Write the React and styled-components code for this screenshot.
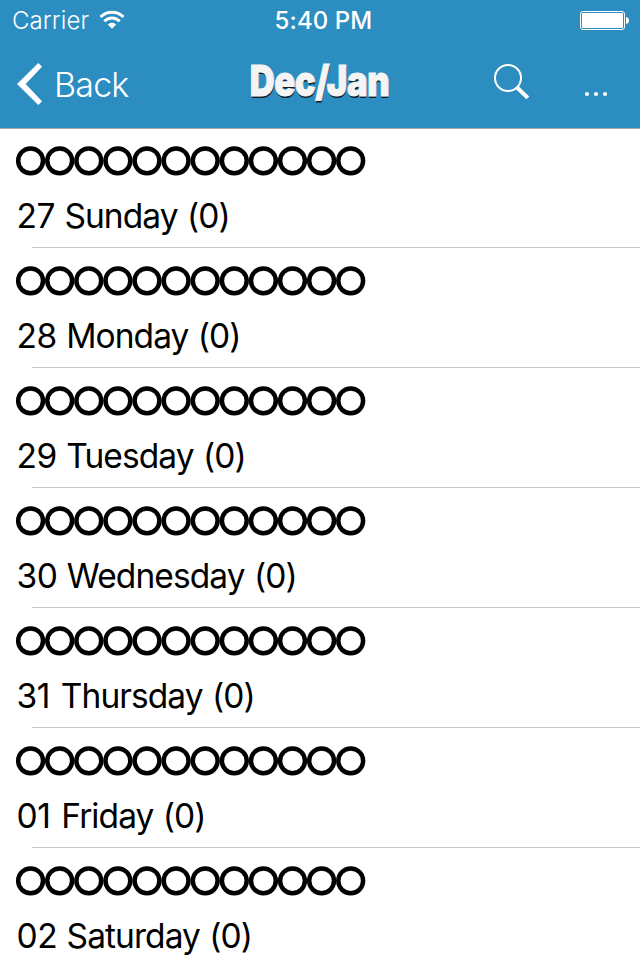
import styled, { createGlobalStyle } from "styled-components";

const GlobalStyle = createGlobalStyle`
    * {
        box-sizing: border-box;
    }
    body {
        margin: 0;
        background: #ffffff;
        font-family: Inter, "Liberation Sans", sans-serif;
    }
`;

const Screen = styled.div`
    width: 640px;
    height: 960px;
    overflow: hidden;
    background: #ffffff;
    color: #000000;
`;

const Header = styled.header`
    height: 129px;
    background: #2c8dc1;
    border-bottom: 1px solid #a7a9ab;
    color: #ffffff;
`;

const StatusBar = styled.div`
    display: grid;
    grid-template-columns: 1fr auto 1fr;
    align-items: center;
    height: 40px;
    padding: 0 11px 0 12px;
`;

const Carrier = styled.div`
    display: flex;
    align-items: center;
    gap: 10px;
    height: 40px;
    font-size: 24px;
    font-weight: 300;
    letter-spacing: 0.1px;
`;

const Clock = styled.div`
    height: 40px;
    padding: 1px 0 0 6px;
    font-size: 24px;
    font-weight: 500;
    line-height: 40px;
    letter-spacing: 0.1px;
`;

const BatteryIcon = styled.svg`
    display: block;
    justify-self: end;
`;

const NavBar = styled.nav`
    display: grid;
    grid-template-columns: 234px 172px 1fr;
    height: 88px;
`;

const BackButton = styled.div`
    display: flex;
    align-items: center;
    gap: 12px;
    height: 88px;
    padding-left: 16px;
    font-size: 34px;
    font-weight: 300;
    letter-spacing: -0.8px;
`;

const Title = styled.h1`
    display: flex;
    justify-content: center;
    margin: 0 1px 0 0;
    color: #f4f4f4;
    font-size: 42px;
    font-weight: 900;
    line-height: 82px;
    letter-spacing: -0.6px;
    white-space: nowrap;
    -webkit-text-stroke: 0.9px #f4f4f4;
    text-shadow: 0.5px 2px 0 #10202b;
    transform: scaleX(0.825);
`;

const Actions = styled.div`
    display: flex;
    padding: 24px 0 0 87px;
    gap: 54px;
`;

const List = styled.ul`
    margin: 0;
    padding: 0;
    list-style: none;
`;

const DayRow = styled.li`
    height: 120px;
    padding: 17px 0 0 16px;
`;

const Circles = styled.svg`
    display: block;
`;

const DayLabel = styled.div`
    margin: 17px 0 8px;
    padding-left: 0.5px;
    font-size: 33.5px;
    line-height: 46px;
    letter-spacing: -0.92px;
    word-spacing: 0.8px;
    white-space: nowrap;
`;

const DayNumber = styled.span`
    margin-right: ${(props) => (props.$narrow ? 1.5 : 0)}px;
    letter-spacing: -0.4px;
`;

const Divider = styled.div`
    height: 1px;
    margin-left: 16px;
    background: #c8c7cc;
`;

const days = [
    { date: "27", name: "Sunday" },
    { date: "28", name: "Monday" },
    { date: "29", name: "Tuesday" },
    { date: "30", name: "Wednesday" },
    { date: "31", name: "Thursday" },
    { date: "01", name: "Friday" },
    { date: "02", name: "Saturday" },
];

const slots = Array.from({ length: 12 }, (_, i) => i);

export default function App() {
    return (
        <Screen>
            <GlobalStyle />
            <Header>
                <StatusBar>
                    <Carrier>
                        <span>Carrier</span>
                        <svg width="26" height="20" viewBox="0 0 26 20" fill="none" stroke="#ffffff" strokeWidth="3">
                            <path d="M1.5 7A16.3 16.3 0 0 1 24.5 7" />
                            <path d="M5.3 11.2A10.6 10.6 0 0 1 20.7 11.2" />
                            <path d="M13 18.8L8.7 14.6A6 6 0 0 1 17.3 14.6Z" fill="#ffffff" stroke="none" />
                        </svg>
                    </Carrier>
                    <Clock>5:40 PM</Clock>
                    <BatteryIcon width="49" height="20" viewBox="0 0 49 20">
                        <rect x="0.5" y="1.5" width="44" height="18" rx="2.5" fill="none" stroke="#ffffff" />
                        <rect x="2" y="3" width="41" height="15" rx="1" fill="#ffffff" />
                        <path d="M46 7Q49 7.5 49 10.5T46 14Z" fill="#ffffff" />
                    </BatteryIcon>
                </StatusBar>
                <NavBar>
                    <BackButton>
                        <svg width="26" height="44" viewBox="0 0 26 44">
                            <path d="M22.3 1L26 4.8L9.7 22L26 39.2L22.3 43L1 22Z" fill="#ffffff" />
                        </svg>
                        <span>Back</span>
                    </BackButton>
                    <Title>Dec/Jan</Title>
                    <Actions>
                        <svg width="37" height="37" viewBox="0 0 37 37" fill="none" stroke="#ffffff">
                            <circle cx="15" cy="14" r="13" strokeWidth="2" />
                            <path d="M24 23.5L34.8 33.9" strokeWidth="4" />
                        </svg>
                        <svg width="26" height="37" viewBox="0 0 26 37" fill="#ffffff">
                            <circle cx="3" cy="30" r="2.1" />
                            <circle cx="12" cy="30" r="2.1" />
                            <circle cx="21" cy="30" r="2.1" />
                        </svg>
                    </Actions>
                </NavBar>
            </Header>
            <List>
                {days.map((day) => (
                    <DayRow key={day.date}>
                        <Circles width="350" height="30" viewBox="0 0 350 30" fill="none" stroke="#000000" strokeWidth="4.5">
                            {slots.map((i) => (
                                <circle key={i} cx={14.6 + i * 29.1} cy="14.8" r="12.4" />
                            ))}
                        </Circles>
                        <DayLabel>
                            <DayNumber $narrow={day.date.endsWith("1")}>{day.date}</DayNumber> {day.name} (0)
                        </DayLabel>
                        <Divider />
                    </DayRow>
                ))}
            </List>
        </Screen>
    );
}
